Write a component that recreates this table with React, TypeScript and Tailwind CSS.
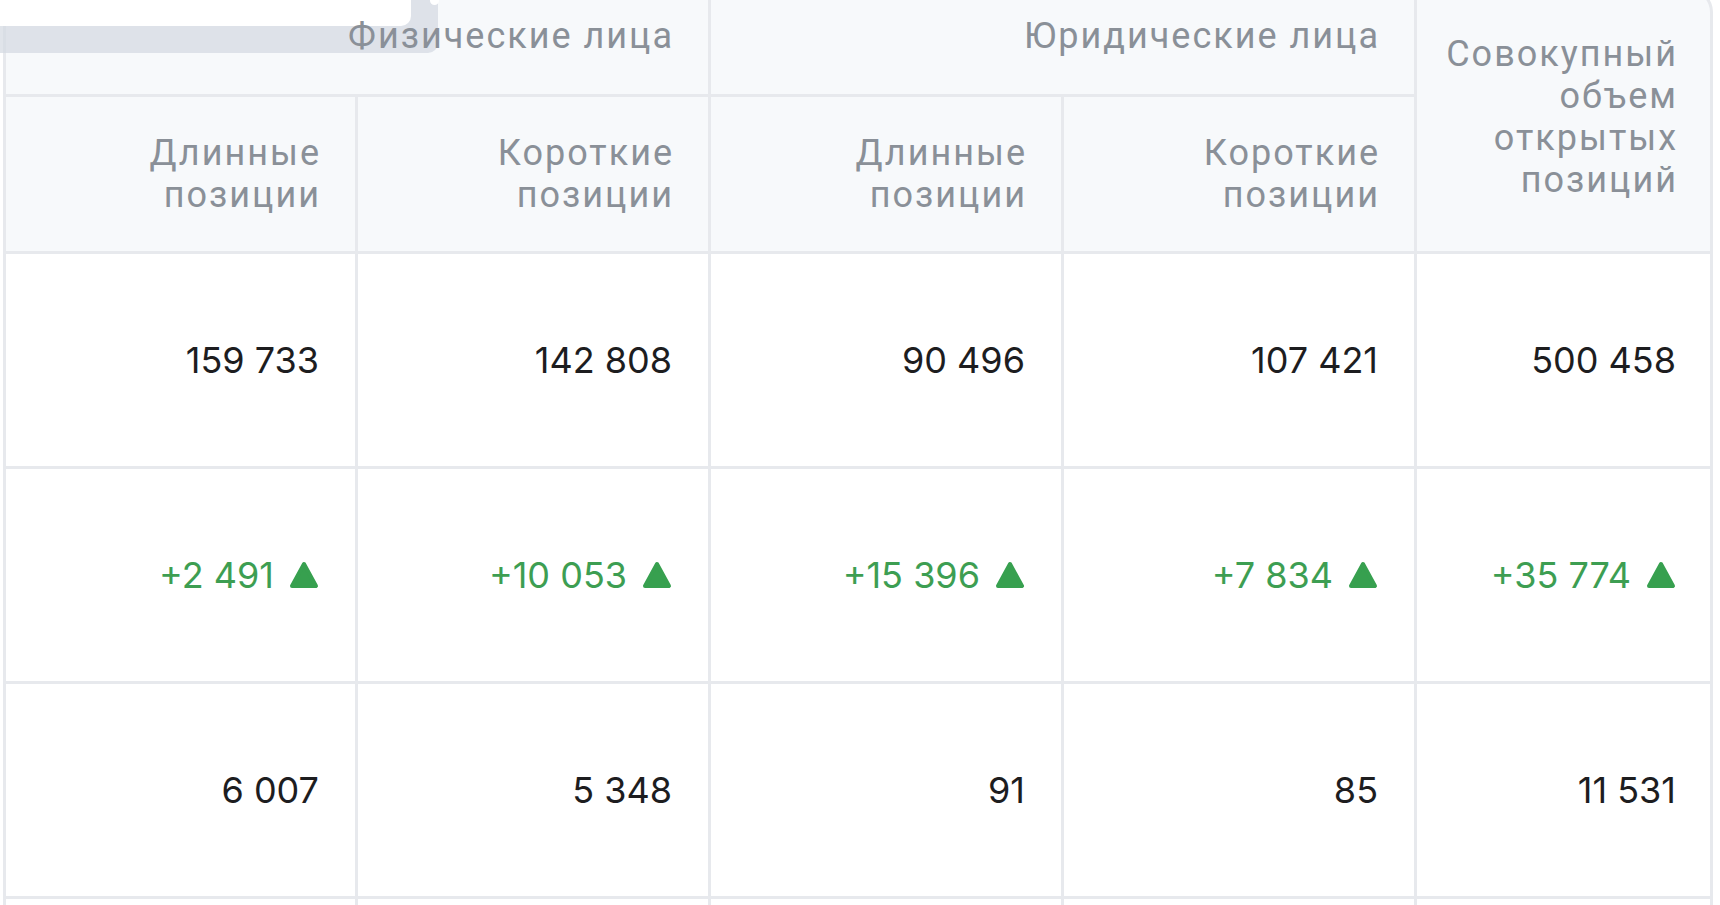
import React from "react";

// Header labels and table data
const groups = ["Физические лица", "Юридические лица"];
const subHeaders = ["Длинные", "Короткие", "Длинные", "Короткие"];

const values = ["159 733", "142 808", "90 496", "107 421", "500 458"];
const deltas = ["+2 491", "+10 053", "+15 396", "+7 834", "+35 774"];
const changes = ["6 007", "5 348", "91", "85", "11 531"];

const headerText =
  "text-[36px] leading-[42px] font-normal text-[#8a9098] text-right tracking-[2px] font-['Roboto',sans-serif]";
const numberText = "text-[36px] leading-[42px] text-right font-['Inter',sans-serif]";

const UpTriangle = () => (
  <svg width="30" height="30" viewBox="0 0 30 30" className="ml-[15px] shrink-0">
    <path
      d="M15 4 L27 26 L3 26 Z"
      fill="#37a04f"
      stroke="#37a04f"
      strokeWidth="4"
      strokeLinejoin="round"
    />
  </svg>
);

const cellBase = "border-r-[3px] border-b-[3px] border-[#e7e9ed] align-middle";

const BodyRow = ({ children }: { children: React.ReactNode[] }) => (
  <tr>
    {children.map((c, i) => (
      <td
        key={i}
        className={`${cellBase} h-[215px] bg-white ${i === 0 ? "border-l-[3px]" : ""} ${
          i === 4 ? "pr-[34px] bg-[#fcfdfe]" : "pr-[36px]"
        }`}
      >
        {c}
      </td>
    ))}
  </tr>
);

export default function App() {
  return (
    <div className="relative h-[905px] w-[1720px] overflow-hidden bg-white">
      {/* partially visible popup at the top-left corner */}
      <div className="absolute left-0 top-0 z-10 h-[53px] w-[438px] rounded-br-[10px] bg-[#d3d9e1]/70">
        <div className="h-[26px] w-[411px] rounded-br-[10px] bg-white" />
        <div className="absolute left-[430px] top-0 h-[5px] w-[9px] rounded-b-full bg-white" />
      </div>

      <div className="ml-[3px] -mt-[12px] w-[1710px]">
        <table className="w-full table-fixed border-separate border-spacing-0">
          <colgroup>
            <col className="w-[355px]" />
            <col className="w-[353px]" />
            <col className="w-[353px]" />
            <col className="w-[353px]" />
            <col className="w-[296px]" />
          </colgroup>
          <thead>
            <tr>
              {groups.map((g, i) => (
                <th
                  key={g}
                  colSpan={2}
                  className={`${cellBase} ${headerText} h-[109px] bg-[#f7f9fb] pr-[34px] pb-[10px] ${
                    i === 0 ? "border-l-[3px]" : ""
                  }`}
                >
                  <span className="relative z-20">{g}</span>
                </th>
              ))}
              <th
                rowSpan={2}
                className={`${cellBase} ${headerText} rounded-tr-[24px] border-t-[3px] bg-[#f7f9fb] pr-[32px] pb-[9px]`}
              >
                Совокупный
                <br />
                объем
                <br />
                открытых
                <br />
                позиций
              </th>
            </tr>
            <tr>
              {subHeaders.map((s, i) => (
                <th
                  key={i}
                  className={`${cellBase} ${headerText} h-[157px] bg-[#f7f9fb] pr-[34px] ${
                    i === 0 ? "border-l-[3px]" : ""
                  }`}
                >
                  {s}
                  <br />
                  позиции
                </th>
              ))}
            </tr>
          </thead>
          <tbody>
            <BodyRow>
              {values.map((v) => (
                <div key={v} className={`${numberText} text-[#1d1d1f]`}>
                  {v}
                </div>
              ))}
            </BodyRow>
            <BodyRow>
              {deltas.map((d) => (
                <div key={d} className={`${numberText} flex items-center justify-end text-[#3d9e52]`}>
                  <span>{d}</span>
                  <UpTriangle />
                </div>
              ))}
            </BodyRow>
            <BodyRow>
              {changes.map((c) => (
                <div key={c} className={`${numberText} text-[#1d1d1f]`}>
                  {c}
                </div>
              ))}
            </BodyRow>
            <BodyRow>
              {["", "", "", "", ""].map((_, i) => (
                <div key={i} />
              ))}
            </BodyRow>
          </tbody>
        </table>
      </div>
    </div>
  );
}
